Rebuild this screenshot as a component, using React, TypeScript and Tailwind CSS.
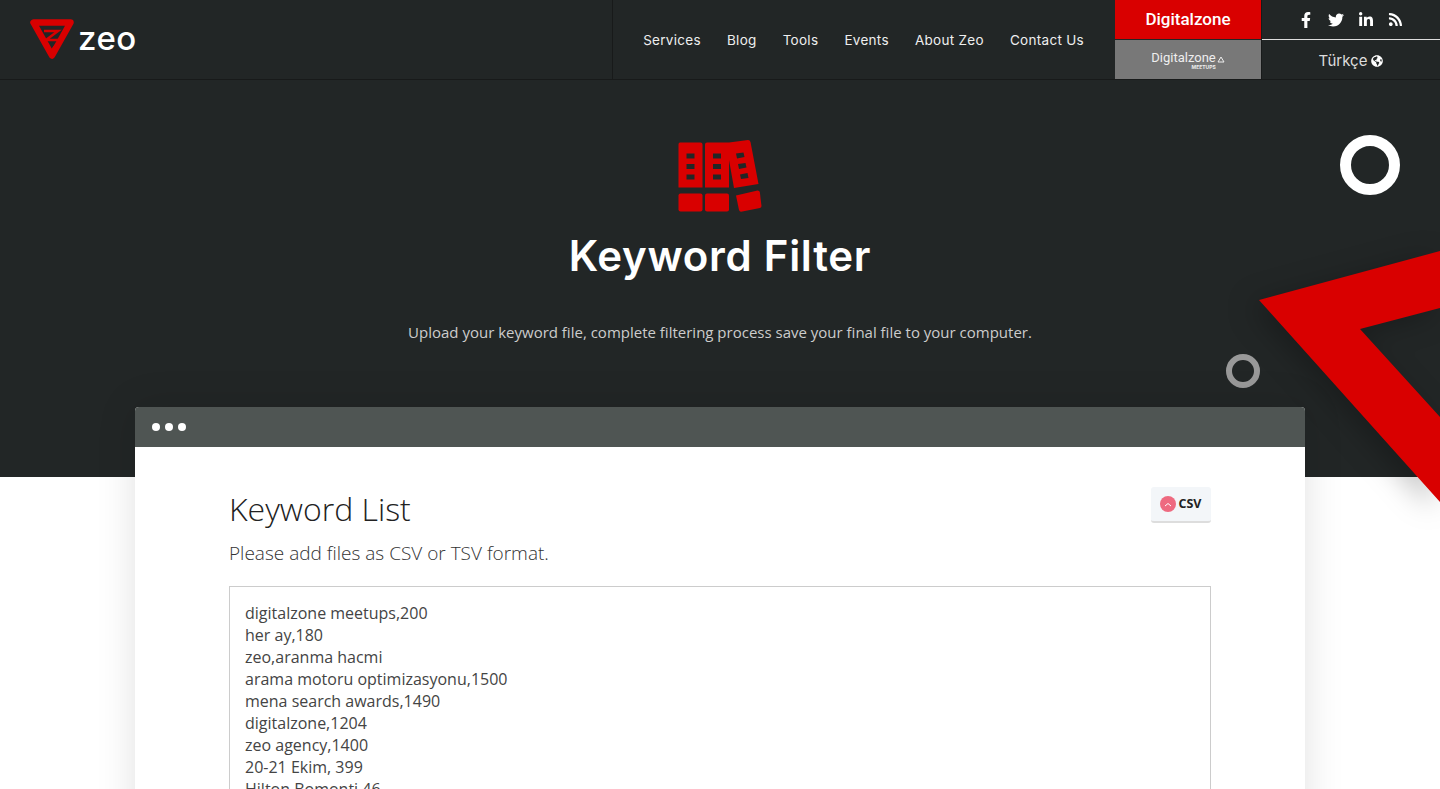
import { FaFacebookF, FaTwitter, FaLinkedinIn, FaRss, FaGlobeAmericas } from 'react-icons/fa';

const navItems = ['Services', 'Blog', 'Tools', 'Events', 'About Zeo', 'Contact Us'];

const keywords = `digitalzone meetups,200
her ay,180
zeo,aranma hacmi
arama motoru optimizasyonu,1500
mena search awards,1490
digitalzone,1204
zeo agency,1400
20-21 Ekim, 399
Hilton Bomonti,46
seo,1200`;

function ZeoLogo() {
  return (
    <div className="flex items-center">
      <svg width="46" height="41" viewBox="30 20 46 41" className="mr-[2px]">
        <path d="M33.500 23.500H70.500L52 56.500Z" fill="none" stroke="#d90000" strokeWidth="6.500" strokeLinejoin="round" />
        <path d="M44 32H58L46 41H60L52 51" fill="none" stroke="#d90000" strokeWidth="2.500" />
      </svg>
      <span className="font-['Inter',sans-serif] text-[33px] leading-none font-medium text-white tracking-[0.500px] mt-[-3px]">zeo</span>
    </div>
  );
}

function FilterIcon() {
  return (
    <svg width="84" height="73" viewBox="678 140 84 73">
      <g fill="#d90000">
        <path fillRule="evenodd" d="M680 142.500H700.500Q702.500 142.500 702.500 144.500V187.500H678.500V144.500Q678.500 142.500 680 142.500ZM686.500 153.500V158.500H694.500V153.500ZM686.500 164V169H694.500V164ZM686.500 174.500V179.500H694.500V174.500Z" />
        <rect x="678.500" y="193.500" width="24" height="18" rx="2" />
        <path fillRule="evenodd" d="M707 142.500H729L748 140Q750 140 750.500 142L758.500 184L734 188L729 160V187.500H705V144.500Q705 142.500 707 142.500ZM713 153.500V158.500H721V153.500ZM713 164V169H721V164ZM713 174.500V179.500H721V174.500ZM736 153.500L737 158.500L744.500 157L743.500 152.500ZM738 164L739 169L746.500 167.500L745.500 163ZM740 174.500L741 179L748.500 178L747.500 173Z" />
        <rect x="705" y="193.500" width="24" height="18" rx="2" />
        <path d="M736 195.500L757.500 190.500Q759.500 190.500 759.800 192L761.500 206Q761.500 207.500 760 208L741 211.700Q739.500 211.700 739 210Z" />
      </g>
    </svg>
  );
}

function Header() {
  return (
    <header className="flex h-20 bg-[#222626] border-b border-[#181a1a] font-['Inter',sans-serif]">
      <div className="w-[613px] border-r border-[#181a1a] pl-[30px] flex items-center">
        <ZeoLogo />
      </div>
      <nav className="flex-1 flex items-center justify-end gap-[26px] pr-[31px] pt-[1px] text-[13.500px] tracking-[0.300px] text-[#eee]">
        {navItems.map((item) => (
          <a key={item} href="#">{item}</a>
        ))}
      </nav>
      <div className="w-[147px] flex flex-col border-r border-[#181a1a]">
        <div className="h-[39px] bg-[#d90000] flex items-center justify-center text-white text-[17px] font-medium font-['Roboto',sans-serif]">Digitalzone</div>
        <div className="h-[39px] mt-[1px] bg-[#787878] flex items-center justify-center text-[#eee] pt-[2px]">
          <div className="flex flex-col items-end">
            <span className="text-[13px] leading-[13px] font-['Roboto',sans-serif]">Digitalzone</span>
            <span className="text-[5px] leading-[6px] font-bold">MEETUPS</span>
          </div>
          <svg width="8" height="7" viewBox="0 0 8 7" className="ml-[1px] mb-[3px]">
            <path d="M4 1L7 6H1Z" fill="none" stroke="#eee" strokeWidth="1" />
          </svg>
        </div>
      </div>
      <div className="w-[178px] flex flex-col">
        <div className="h-[40px] border-b border-[#ddd] flex items-center justify-center gap-[14px] pr-[1px] text-white text-[16px]">
          <FaFacebookF />
          <FaTwitter />
          <FaLinkedinIn />
          <FaRss className="text-[15px]" />
        </div>
        <div className="flex-1 flex items-center justify-center gap-[4px] pt-[3px] text-[#ddd] text-[15px]">
          Türkçe <FaGlobeAmericas className="text-[12px] text-white" />
        </div>
      </div>
    </header>
  );
}

export default function App() {
  return (
    <div className="relative h-[789px] overflow-hidden bg-white font-['Open_Sans',sans-serif]">
      <Header />
      <section className="h-[397px] bg-[#222626] flex flex-col items-center pt-[60px]">
        <FilterIcon />
        <h1 className="mt-[18px] font-['Inter',sans-serif] font-semibold text-[42px] leading-[50px] text-white tracking-[0.700px]">Keyword Filter</h1>
        <p className="mt-[39px] text-[15px] leading-[24px] text-[#ccc]">
          Upload your keyword file, complete filtering process save your final file to your computer.
        </p>
      </section>

      <div className="absolute left-[1340px] top-[135px] size-[60px] rounded-full border-[11px] border-white" />
      <div className="absolute left-[1226px] top-[354px] size-[34px] rounded-full border-[6px] border-[#999]" />
      <svg className="absolute left-[1240px] top-[240px] drop-shadow-[-8px_6px_14px_rgba(0,0,0,0.25)]" width="200" height="270" viewBox="1240 240 200 270">
        <path d="M1259 300L1440 251V308L1360 329L1440 417V502Z" fill="#d90000" />
      </svg>

      <main className="absolute left-[135px] top-[407px] w-[1170px] h-[500px] rounded-t-[4px] overflow-hidden bg-white shadow-[0_0_40px_rgba(0,0,0,0.12)]">
        <div className="h-10 bg-[#4f5553] flex items-center gap-[5px] pl-[17px]">
          <span className="size-2 rounded-full bg-white" />
          <span className="size-2 rounded-full bg-white" />
          <span className="size-2 rounded-full bg-white" />
        </div>
        <div className="px-[94px] pt-[39px]">
          <div className="flex justify-between">
            <div>
              <h2 className="text-[32px] leading-[46px] font-light text-[#222]">Keyword List</h2>
              <p className="mt-[9px] text-[19px] leading-[24px] font-light text-[#333]">Please add files as CSV or TSV format.</p>
            </div>
            <button className="mt-[1px] h-9 w-[60px] rounded-[3px] bg-[#f3f6f9] border-b-2 border-[#ddd] flex items-center justify-center gap-[3px] pr-[1px] text-[12.500px] font-bold text-[#222]">
              <span className="size-4 rounded-full bg-[#ee6a80] flex items-center justify-center">
                <svg width="8" height="5" viewBox="0 0 8 5"><path d="M1 4L4 1.500L7 4" fill="none" stroke="#fff" strokeWidth="1" /></svg>
              </span>
              CSV
            </button>
          </div>
          <textarea
            readOnly
            defaultValue={keywords}
            className="mt-[21px] block w-full h-[300px] resize-none overflow-hidden border border-[#ccc] px-[15px] py-[15px] text-[16px] leading-[22px] text-[#444] outline-none"
          />
        </div>
      </main>
    </div>
  );
}
